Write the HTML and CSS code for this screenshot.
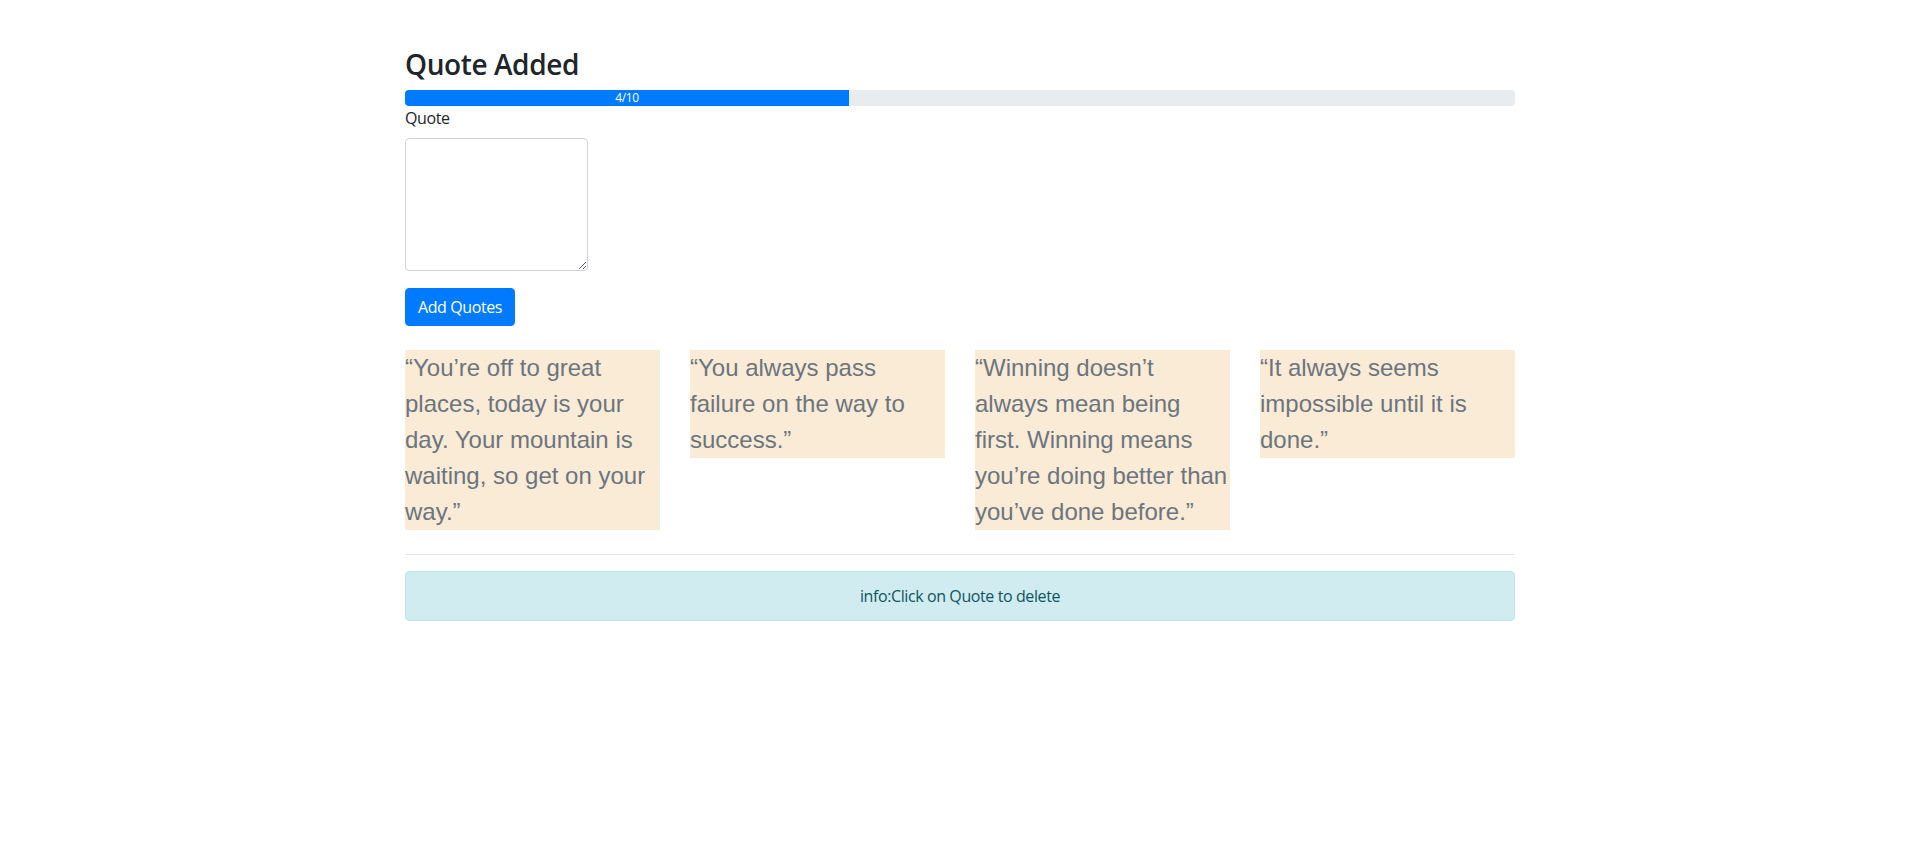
FILE: index.html
```html
<!DOCTYPE html>
<html lang="en">
<head>
<meta charset="utf-8">
<title>Quotes</title>
<link rel="stylesheet" href="styles.css">
</head>
<body>
<div class="container">
  <h3 class="title">Quote Added</h3>
  <div class="progress">
    <div class="progress-bar" style="width: 40%">4/10</div>
  </div>
  <form class="quote-form">
    <label class="label" for="quote">Quote</label>
    <textarea id="quote" class="textarea"></textarea>
    <button type="button" class="btn">Add Quotes</button>
  </form>
  <div class="quotes">
    <div class="quote">“You’re off to great places, today is your day. Your mountain is waiting, so get on your way.”</div>
    <div class="quote">“You always pass failure on the way to success.”</div>
    <div class="quote">“Winning doesn’t always mean being first. Winning means you’re doing better than you’ve done before.”</div>
    <div class="quote">“It always seems impossible until it is done.”</div>
  </div>
  <hr class="divider">
  <div class="alert">info:Click on Quote to delete</div>
</div>
</body>
</html>
```

FILE: styles.css
```css
* { box-sizing: border-box; }
html, body {
  margin: 0;
  padding: 0;
  background: #fff;
}
body {
  font-family: "Open Sans", "Noto Sans", Arial, sans-serif;
  font-size: 16px;
  line-height: 1.5;
  color: #212529;
  letter-spacing: -0.025em;
}
.container {
  width: 1110px;
  margin: 0 auto;
  padding-top: 48px;
}
.title {
  margin: 0 0 8px;
  font-size: 28px;
  font-weight: 600;
  line-height: 1.2;
  color: #212529;
}
.progress {
  display: flex;
  height: 16px;
  background: #e9ecef;
  border-radius: 4px;
  overflow: hidden;
  font-size: 12px;
}
.progress-bar {
  display: flex;
  align-items: center;
  justify-content: center;
  background: #007bff;
  color: #fff;
  line-height: 16px;
}
.quote-form {
  display: flex;
  flex-direction: column;
  align-items: flex-start;
  margin-bottom: 24px;
}
.label {
  display: block;
  margin-bottom: 8px;
}
.textarea {
  display: block;
  width: 183px;
  height: 133px;
  margin: 0 0 17px;
  border: 1px solid #ced4da;
  border-radius: 4px;
  font: inherit;
}
.btn {
  height: 38px;
  padding: 6px 12px;
  border: 1px solid #007bff;
  border-radius: 4px;
  background: #007bff;
  color: #fff;
  font: inherit;
  font-size: 16px;
  line-height: 24px;
  letter-spacing: -0.025em;
  cursor: pointer;
}
.quotes {
  display: grid;
  grid-template-columns: repeat(4, 1fr);
  column-gap: 30px;
  align-items: start;
  margin-bottom: 8px;
}
.quote {
  background: #faebd7;
  color: #6c757d;
  font-family: "Liberation Sans", Arial, sans-serif;
  font-size: 24px;
  line-height: 36px;
  letter-spacing: 0;
  margin-bottom: 8px;
  cursor: pointer;
}
.divider {
  margin: 16px 0;
  border: 0;
  border-top: 1px solid rgba(0, 0, 0, 0.1);
}
.alert {
  padding: 12px 20px;
  border: 1px solid #bee5eb;
  border-radius: 4px;
  background: #d1ecf1;
  color: #0c5460;
  text-align: center;
  margin-bottom: 16px;
}
```
